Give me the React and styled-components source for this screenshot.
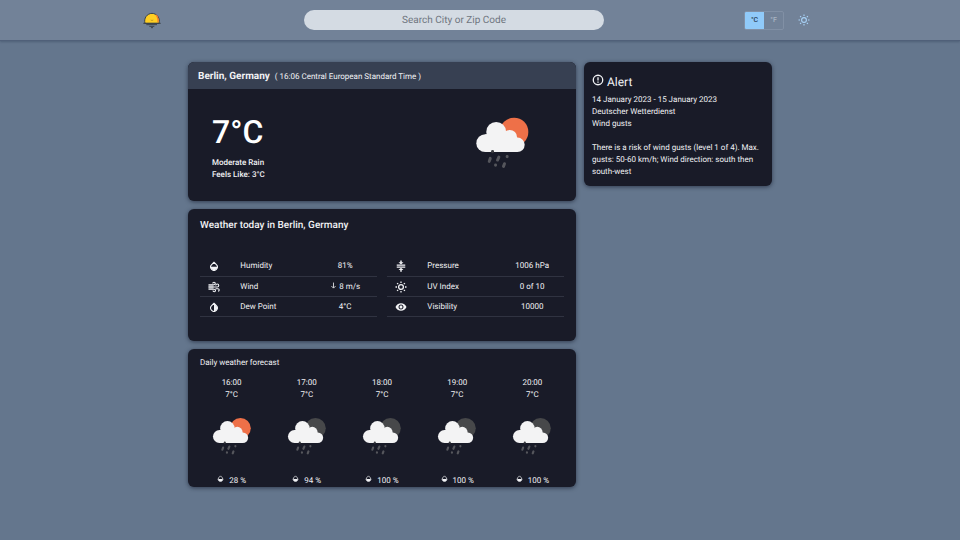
import React from "react";
import styled, { createGlobalStyle } from "styled-components";
import { MdVisibility } from "react-icons/md";

const GlobalStyle = createGlobalStyle`
  *, *::before, *::after { box-sizing: border-box; }
  body {
    margin: 0;
    min-height: 100vh;
    background: #64768d;
    color: #f1f2f5;
    font-family: Roboto, "Liberation Sans", sans-serif;
    font-size: 8px;
    line-height: 12px;
    text-rendering: geometricPrecision;
  }
  h1, h2, p { margin: 0; }
  button, input { font: inherit; text-rendering: inherit; }
`;

const Header = styled.header`
  display: flex;
  justify-content: space-evenly;
  align-items: center;
  min-height: 41px;
  padding-right: 4px;
  background: #728298;
  border-bottom: 1px solid #506079;
  box-shadow: 0 1px 2px rgba(30, 45, 70, 0.3);
`;

const Logo = styled.a`
  display: flex;
  justify-content: center;
  width: 24px;
`;

const SearchInput = styled.input`
  width: 300px;
  height: 20px;
  padding: 0 12px;
  border: 0;
  border-radius: 10px;
  background: #d4dbe3;
  color: #39414e;
  font-size: 10px;
  text-align: center;
  &::placeholder { color: #6f757e; opacity: 1; }
`;

const Controls = styled.div`
  display: flex;
  align-items: center;
  gap: 12px;
  width: 72px;
`;

const UnitToggle = styled.div`
  display: flex;
  flex: none;
  width: 40px;
  height: 19px;
  border: 1px solid #8190a5;
  border-radius: 2px;
  overflow: hidden;
`;

const UnitButton = styled.button`
  flex: 1;
  padding: 0;
  border: 0;
  background: ${(p) => (p.$active ? "#90caf9" : "transparent")};
  color: ${(p) => (p.$active ? "#263c55" : "#a9b4c3")};
  font-size: 7px;
  font-weight: 500;
  line-height: 12px;
`;

const ThemeButton = styled.button`
  display: flex;
  flex: none;
  align-items: center;
  justify-content: center;
  width: 16px;
  height: 16px;
  padding: 0;
  border: 0;
  background: none;
  color: #a9d3f8;
`;

const Main = styled.main`
  display: grid;
  grid-template-columns: minmax(0, 388fr) minmax(0, 188fr);
  align-items: start;
  gap: 8px;
  max-width: 600px;
  margin: 0 auto;
  padding: 21px 8px;
`;

const Column = styled.div`
  display: grid;
  gap: 8px;
`;

const Card = styled.section`
  overflow: hidden;
  border-radius: 6px;
  background: #191b28;
  box-shadow: 0 1px 4px rgba(15, 22, 38, 0.6);
`;

const PlaceBar = styled.div`
  display: flex;
  align-items: baseline;
  gap: 5px;
  padding: 7px 10px 4px;
  background: #374052;
`;

const Place = styled.h1`
  font-size: 10px;
  font-weight: 700;
  line-height: 16px;
`;

const CurrentBody = styled.div`
  display: flex;
  align-items: flex-start;
  justify-content: space-between;
  padding: 26px 46px 20px 24px;
`;

const Temperature = styled.p`
  margin-bottom: 8px;
  color: #fff;
  font-size: 32px;
  font-weight: 500;
  line-height: 34px;
`;

const Condition = styled.p`
  font-weight: 500;
`;

const TodayCard = styled(Card)`
  padding: 11px 12px 24px;
`;

const TodayTitle = styled.h2`
  margin-bottom: 24px;
  font-size: 10px;
  font-weight: 500;
`;

const Tables = styled.div`
  display: grid;
  grid-template-columns: 1fr 1fr;
  gap: 10px;
`;

const DetailTable = styled.table`
  width: 100%;
  table-layout: fixed;
  border-collapse: collapse;
`;

const DetailRow = styled.tr`
  height: 20px;
  border-bottom: 1px solid #303341;
`;

const IconCell = styled.td`
  width: 16%;
  padding: 1px 0 0;
  text-align: center;
  svg { display: block; margin: 0 auto; }
`;

const NameCell = styled.th`
  width: 48%;
  padding: 1px 0 0 12px;
  font-weight: 400;
  text-align: left;
`;

const ValueCell = styled.td`
  width: 36%;
  padding: 1px 0 0;
  text-align: center;
  white-space: nowrap;
`;

const ForecastCard = styled(Card)`
  padding: 8px 6px 0;
`;

const ForecastTitle = styled.h2`
  margin: 0 6px 8px;
  font-size: 8px;
  font-weight: 400;
`;

const Hours = styled.ul`
  display: grid;
  grid-template-columns: repeat(5, 1fr);
  margin: 0;
  padding: 0;
  list-style: none;
`;

const Hour = styled.li`
  display: flex;
  flex-direction: column;
  align-items: center;
`;

const HourIcon = styled.div`
  display: flex;
  margin: 15px 0 19px;
`;

const Chance = styled.p`
  display: flex;
  gap: 5px;
`;

const AlertCard = styled(Card)`
  padding: 12px 8px 8px;
`;

const AlertTitle = styled.h2`
  display: flex;
  gap: 3px;
  margin-bottom: 4px;
  font-size: 12px;
  font-weight: 400;
  line-height: 16px;
`;

const AlertText = styled.p`
  margin-top: 12px;
`;

function SunriseLogo() {
  return (
    <svg width="18" height="18" viewBox="0 0 54 54" aria-hidden="true">
      <path d="M6 37a22 23 0 1 1 42 0z" fill="#ffcf22" stroke="#39424a" strokeWidth="3" />
      <path d="M39 12q8 8 6 22" fill="none" stroke="#ef7b30" strokeWidth="4" />
      <path d="M23 27q4 3 8 0" fill="none" stroke="#a88424" strokeWidth="2" />
      <path d="M1 37h52M10 41h32" stroke="#39424a" strokeWidth="3" />
      <path d="M19 46h15M24 50h6" stroke="#39424a" strokeWidth="3" />
    </svg>
  );
}

function SunIcon({ size, thick }) {
  return (
    <svg width={size} height={size} viewBox="0 0 24 24" fill="none" stroke="currentColor" strokeWidth={thick ? 2.6 : 2.2} aria-hidden="true">
      <circle cx="12" cy="12" r="4.8" />
      <path d="M12 1v3M12 20v3M1 12h3M20 12h3M4.200 4.200l2.100 2.100M17.700 17.700l2.100 2.100M4.200 19.800l2.100-2.100M17.700 6.300l2.100-2.100" />
    </svg>
  );
}

function DropIcon({ size, half }) {
  return (
    <svg width={size} height={size} viewBox="0 0 24 24" aria-hidden="true">
      <path
        d="M12 3L6.300 8.800a8 8 0 1 0 11.400 0z"
        fill="none"
        stroke="currentColor"
        strokeWidth="2.6"
        strokeLinejoin="round"
      />
      <path
        d={half === "right" ? "M12 3l5.700 5.800a8 8 0 0 1-5.700 13.600z" : "M4 14h16a8 8 0 0 1-16 0z"}
        fill="currentColor"
      />
    </svg>
  );
}

function ArrowDownIcon({ size }) {
  return (
    <svg width={size} height={size} viewBox="0 0 24 24" fill="none" stroke="currentColor" strokeWidth="2.8" aria-hidden="true">
      <path d="M12 2v18M5 14l7 7 7-7" />
    </svg>
  );
}

function AlertIcon({ size }) {
  return (
    <svg width={size} height={size} viewBox="0 0 24 24" fill="none" stroke="currentColor" strokeWidth="2.6" aria-hidden="true">
      <circle cx="12" cy="12" r="9.500" />
      <path d="M12 6.500v6.500M12 15v2.600" />
    </svg>
  );
}

function PressureIcon({ size }) {
  return (
    <svg width={size} height={size} viewBox="0 0 24 24" fill="currentColor" aria-hidden="true">
      <path d="M3.500 9h17v2.500h-17zM3.500 13h17v2.500h-17z" />
      <path d="M7 4.500h3.500V1h3v3.500H17l-5 4.500zM7 20h3.500v3.500h3V20H17l-5-4.500z" />
    </svg>
  );
}

function WindIcon({ size }) {
  return (
    <svg width={size} height={size} viewBox="0 0 24 24" fill="none" stroke="currentColor" strokeWidth="2.2" aria-hidden="true">
      <path d="M1 7.500h11a2.500 2.500 0 1 0-2.500-2.500" />
      <path d="M1 12h17.500a3 3 0 1 0-3-3" />
      <path d="M1 16.500h11.500a2.500 2.500 0 1 1-2.500 2.500M15 15.500h5a2.400 2.400 0 0 1 0 4.800" />
      <path d="M1 12h10" strokeWidth="9" strokeOpacity="0.55" />
    </svg>
  );
}

function RainCloud({ size, orb }) {
  return (
    <svg width={size} height={size} viewBox="104 184 166 160" aria-hidden="true">
      <circle cx="222" cy="232" r="43" fill={orb} />
      <g fill="#f3f3f4">
        <circle cx="135" cy="266" r="27" />
        <circle cx="168" cy="232" r="30" />
        <circle cx="209" cy="248" r="22" />
        <circle cx="232" cy="271" r="22" />
        <path d="M135 239l60-6 37 30v30h-97z" />
      </g>
      <g stroke="#55565c" strokeWidth="9" strokeLinecap="round">
        <path d="M150 312l-3 9M176 308l-4 9M193 328l-3 8" />
        <path d="M201 306v1M166 332v1" />
        <path d="M157 291v1" stroke="#3a3b40" />
      </g>
    </svg>
  );
}

const details = [
  [
    { name: "Humidity", value: "81%", icon: <DropIcon size={10} half="bottom" /> },
    {
      name: "Wind",
      value: <><ArrowDownIcon size={7} /> 8 m/s</>,
      icon: <WindIcon size={12} />,
    },
    { name: "Dew Point", value: "4°C", icon: <DropIcon size={10} half="right" /> },
  ],
  [
    { name: "Pressure", value: "1006 hPa", icon: <PressureIcon size={12} /> },
    { name: "UV Index", value: "0 of 10", icon: <SunIcon size={12} thick /> },
    { name: "Visibility", value: "10000", icon: <MdVisibility size={12} /> },
  ],
];

const hours = [
  { time: "16:00", temp: "7°C", chance: "28 %", orb: "#ee7048" },
  { time: "17:00", temp: "7°C", chance: "94 %", orb: "#47484a" },
  { time: "18:00", temp: "7°C", chance: "100 %", orb: "#47484a" },
  { time: "19:00", temp: "7°C", chance: "100 %", orb: "#47484a" },
  { time: "20:00", temp: "7°C", chance: "100 %", orb: "#47484a" },
];

export default function App() {
  return (
    <>
      <GlobalStyle />
      <Header>
        <Logo href="#" aria-label="Home"><SunriseLogo /></Logo>
        <SearchInput type="text" aria-label="Search City or Zip Code" placeholder="Search City or Zip Code" />
        <Controls>
          <UnitToggle role="group" aria-label="Temperature unit">
            <UnitButton type="button" $active aria-pressed="true">°C</UnitButton>
            <UnitButton type="button" aria-pressed="false">°F</UnitButton>
          </UnitToggle>
          <ThemeButton type="button" aria-label="Toggle theme"><SunIcon size={12} /></ThemeButton>
        </Controls>
      </Header>
      <Main>
        <Column>
          <Card>
            <PlaceBar>
              <Place>Berlin, Germany</Place>
              <span>( 16:06 Central European Standard Time )</span>
            </PlaceBar>
            <CurrentBody>
              <div>
                <Temperature>7°C</Temperature>
                <Condition>Moderate Rain</Condition>
                <Condition>Feels Like: 3°C</Condition>
              </div>
              <RainCloud size={55} orb="#ee7048" />
            </CurrentBody>
          </Card>
          <TodayCard>
            <TodayTitle>Weather today in Berlin, Germany</TodayTitle>
            <Tables>
              {details.map((rows) => (
                <DetailTable key={rows[0].name}>
                  <tbody>
                    {rows.map((row) => (
                      <DetailRow key={row.name}>
                        <IconCell>{row.icon}</IconCell>
                        <NameCell scope="row">{row.name}</NameCell>
                        <ValueCell>{row.value}</ValueCell>
                      </DetailRow>
                    ))}
                  </tbody>
                </DetailTable>
              ))}
            </Tables>
          </TodayCard>
          <ForecastCard>
            <ForecastTitle>Daily weather forecast</ForecastTitle>
            <Hours>
              {hours.map((hour) => (
                <Hour key={hour.time}>
                  <span>{hour.time}</span>
                  <span>{hour.temp}</span>
                  <HourIcon><RainCloud size={40} orb={hour.orb} /></HourIcon>
                  <Chance><DropIcon size={7} half="bottom" />{hour.chance}</Chance>
                </Hour>
              ))}
            </Hours>
          </ForecastCard>
        </Column>
        <AlertCard>
          <AlertTitle><AlertIcon size={12} />Alert</AlertTitle>
          <p>14 January 2023 - 15 January 2023</p>
          <p>Deutscher Wetterdienst</p>
          <p>Wind gusts</p>
          <AlertText>
            There is a risk of wind gusts (level 1 of 4). Max. gusts: 50-60 km/h; Wind direction: south then south-west
          </AlertText>
        </AlertCard>
      </Main>
    </>
  );
}
